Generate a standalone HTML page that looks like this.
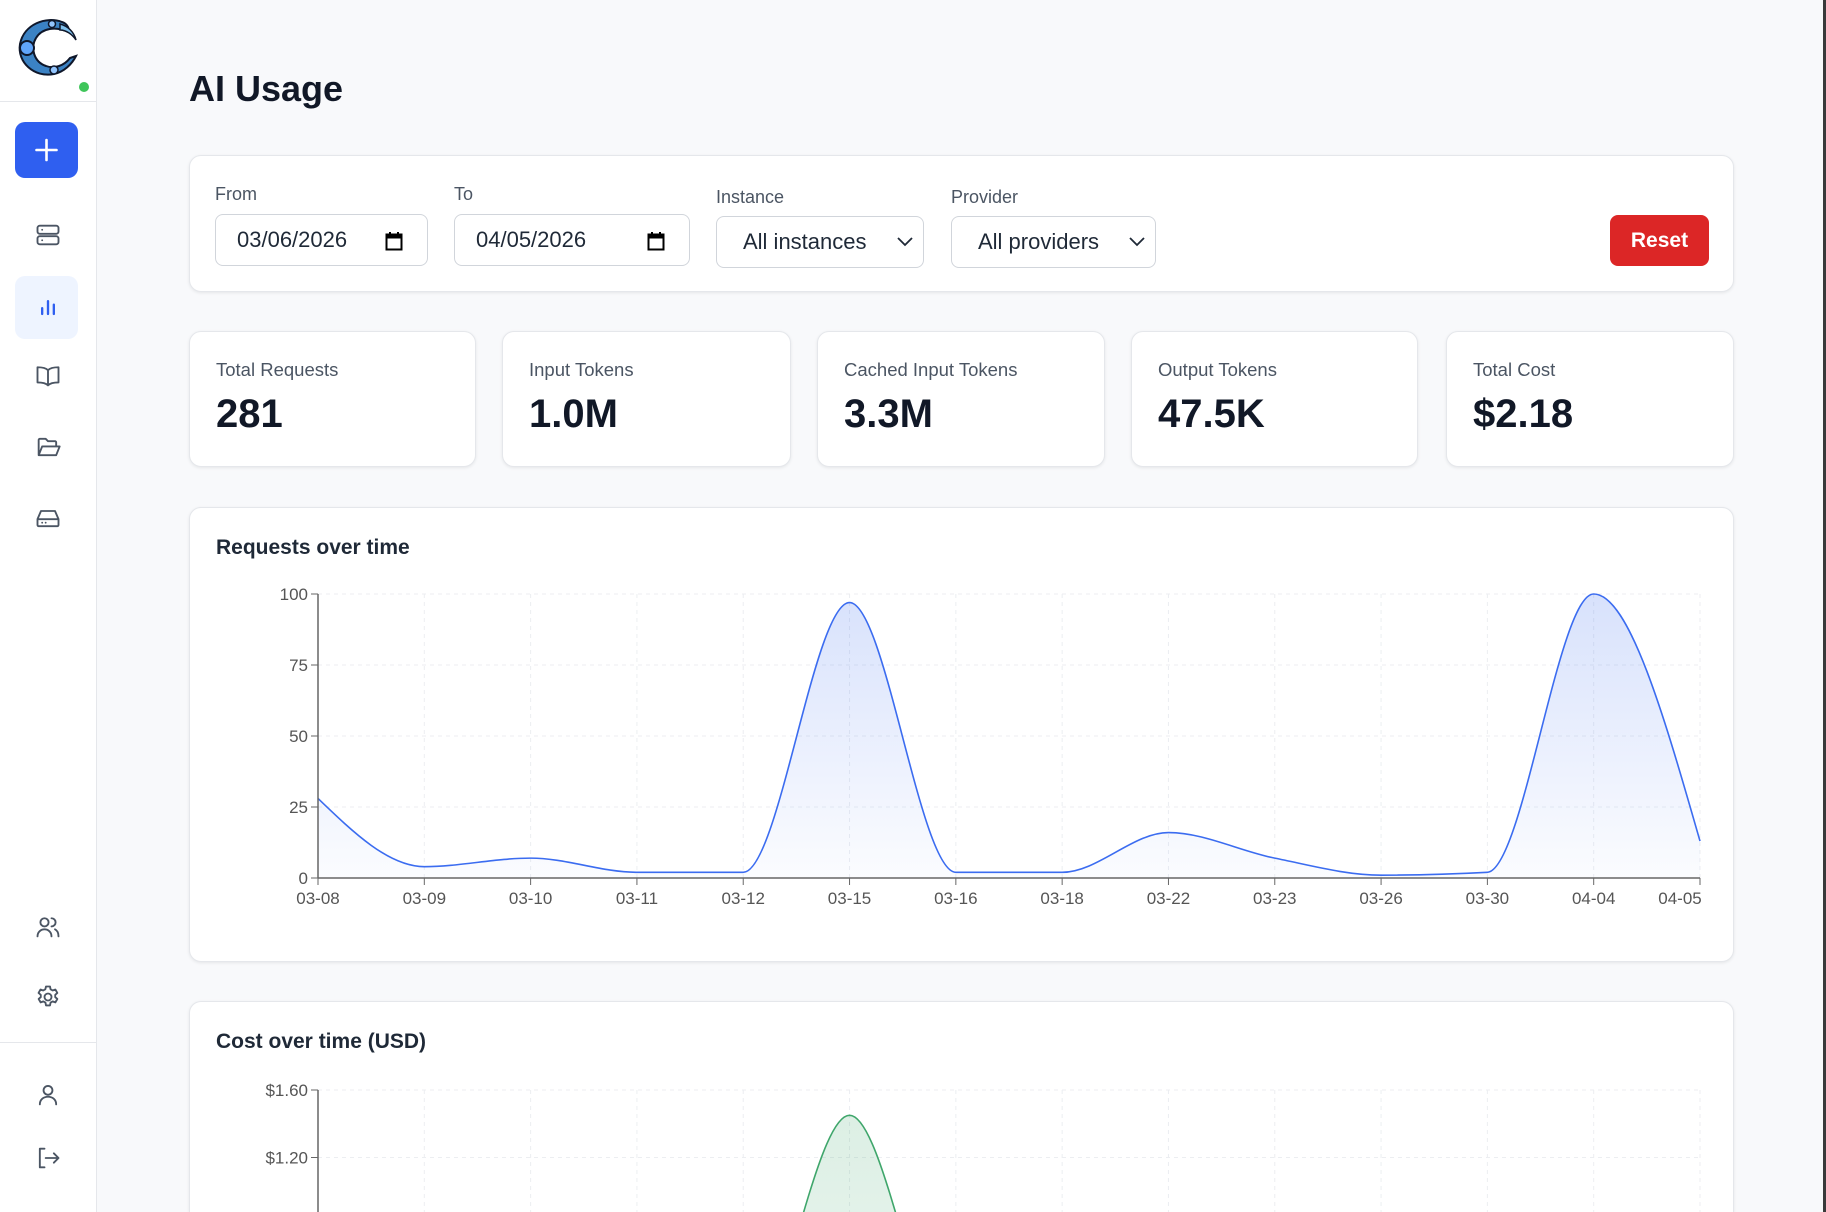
<!DOCTYPE html>
<html><head><meta charset="utf-8">
<style>
*{box-sizing:border-box;margin:0;padding:0}
html{width:1826px;height:1212px;overflow:hidden}
body{width:1826px;height:1212px;overflow:hidden;background:#f8f9fb;font-family:"Liberation Sans",Arial,sans-serif;position:relative;color:#111827}
.sb{position:absolute;left:0;top:0;width:97px;height:1212px;background:#fff;border-right:1px solid #e5e7eb}
.hr{position:absolute;left:0;width:97px;height:1px;background:#e5e7eb}
.ic{position:absolute;left:34px;width:28px;height:28px}
.ic svg{width:28px;height:28px;fill:none;stroke:#4b5563;stroke-width:1.6;stroke-linecap:round;stroke-linejoin:round}
.card{position:absolute;background:#fff;border:1px solid #e5e7eb;border-radius:12px;box-shadow:0 1px 3px rgba(0,0,0,.08)}
.lbl{position:absolute;font-size:18px;color:#4b5563}
.inp{position:absolute;height:52px;border:1px solid #d1d5db;border-radius:8px;background:#fff;font-size:22px;color:#1f2937;line-height:50px;padding-left:21px}
.stat .t{position:absolute;left:26px;top:27px;font-size:18.5px;color:#4b5563}
.stat .v{position:absolute;left:26px;top:60px;font-size:40px;font-weight:bold;color:#111827}
.ctitle{position:absolute;left:26px;font-size:21px;font-weight:bold;color:#1f2937}
.scroll{position:absolute;right:0;top:0;width:3px;height:1212px;background:#3a3a3a}
</style></head><body>
<div class="sb">
  <svg style="position:absolute;left:12px;top:14px" width="70" height="70" viewBox="0 0 70 70">
    <path d="M50 8 C34 2 12 10 8 30 C5 48 22 64 42 60 C52 58 60 50 64 42 L58 44 C52 52 42 55 34 52 C22 48 18 34 24 24 C30 14 44 12 56 18 C58 16 56 10 50 8 Z" fill="#3b82c4" stroke="#0f172a" stroke-width="2"/>
    <path d="M48 10 C56 12 62 18 64 26 C60 20 54 16 48 16 Z" fill="#7ec0ee" stroke="#0f172a" stroke-width="1.5"/>
    <circle cx="15" cy="34" r="7" fill="#60a5fa" stroke="#0f172a" stroke-width="2"/>
    <circle cx="42" cy="56" r="4" fill="#93c5fd" stroke="#0f172a" stroke-width="1.5"/>
    <circle cx="40" cy="10" r="3.5" fill="#93c5fd" stroke="#0f172a" stroke-width="1.5"/>
  </svg>
  <div style="position:absolute;left:79px;top:82px;width:10px;height:10px;border-radius:50%;background:#3fc55a"></div>
  <div class="hr" style="top:101px"></div>
  <div style="position:absolute;left:15px;top:122px;width:63px;height:56px;border-radius:10px;background:#2f5ff0">
    <svg width="63" height="56"><path d="M31.5 18v20M21.5 28h20" stroke="#fff" stroke-width="2.6" stroke-linecap="round"/></svg>
  </div>
  <div class="ic" style="top:221px"><svg viewBox="0 0 24 24"><rect x="3" y="4" width="18" height="7" rx="2"/><rect x="3" y="13" width="18" height="7" rx="2"/><path d="M7 7.5h.01M7 16.5h.01"/></svg></div>
  <div style="position:absolute;left:15px;top:276px;width:63px;height:63px;border-radius:10px;background:#eef4ff"></div>
  <div class="ic" style="top:293px"><svg viewBox="0 0 24 24" style="stroke:#2f5ff0;stroke-width:2"><path d="M7 18v-5M12 18V7M17 18v-8"/></svg></div>
  <div class="ic" style="top:362px"><svg viewBox="0 0 24 24"><path d="M12 7C10 5 7 4.5 3 4.5v13c4 0 7 .5 9 2.5 2-2 5-2.5 9-2.5v-13c-4 0-7 .5-9 2.5zM12 7v13"/></svg></div>
  <div class="ic" style="top:433px"><svg viewBox="0 0 24 24"><path d="M4 19V6a1 1 0 011-1h5l2 2h6a1 1 0 011 1v3M4 19l3-7.5h15L19 19z"/></svg></div>
  <div class="ic" style="top:504px"><svg viewBox="0 0 24 24"><path d="M3 13l3-7h12l3 7v5a1 1 0 01-1 1H4a1 1 0 01-1-1zM3 13h18M7 16h.01M10 16h.01"/></svg></div>
  <div class="ic" style="top:913px"><svg viewBox="0 0 24 24"><circle cx="9" cy="8" r="3.5"/><path d="M3 20c0-3.5 2.7-6 6-6s6 2.5 6 6M15 4.5a3.5 3.5 0 010 7M18 14c2 1 3 3 3 6"/></svg></div>
  <div class="ic" style="top:983px"><svg viewBox="0 0 24 24"><circle cx="12" cy="12" r="3"/><path d="M10.3 3h3.4l.5 2.4 1.8 1 2.3-.8 1.7 2.9-1.8 1.6v2l1.8 1.6-1.7 2.9-2.3-.8-1.8 1-.5 2.4h-3.4l-.5-2.4-1.8-1-2.3.8-1.7-2.9 1.8-1.6v-2L3.9 8.5l1.7-2.9 2.3.8 1.8-1z"/></svg></div>
  <div class="hr" style="top:1042px"></div>
  <div class="ic" style="top:1081px"><svg viewBox="0 0 24 24"><circle cx="12" cy="8" r="3.8"/><path d="M5 20c0-4 3-6.5 7-6.5s7 2.5 7 6.5"/></svg></div>
  <div class="ic" style="top:1144px"><svg viewBox="0 0 24 24"><path d="M9 4H5v16h4M10 12h11M17 8l4 4-4 4"/></svg></div>
</div>

<div style="position:absolute;left:189px;top:68px;font-size:36px;font-weight:bold;color:#111827">AI Usage</div>

<div class="card" style="left:189px;top:155px;width:1545px;height:137px">
  <div class="lbl" style="left:25px;top:28px">From</div>
  <div class="inp" style="left:25px;top:58px;width:213px">03/06/2026<svg style="position:absolute;right:24px;top:16px" width="18" height="20"><rect x="1.5" y="3.5" width="15" height="15" fill="none" stroke="#000" stroke-width="2"/><rect x="1.5" y="3.5" width="15" height="4" fill="#000"/><path d="M5 1v4M13 1v4" stroke="#000" stroke-width="2"/></svg></div>
  <div class="lbl" style="left:264px;top:28px">To</div>
  <div class="inp" style="left:264px;top:58px;width:236px">04/05/2026<svg style="position:absolute;right:24px;top:16px" width="18" height="20"><rect x="1.5" y="3.5" width="15" height="15" fill="none" stroke="#000" stroke-width="2"/><rect x="1.5" y="3.5" width="15" height="4" fill="#000"/><path d="M5 1v4M13 1v4" stroke="#000" stroke-width="2"/></svg></div>
  <div class="lbl" style="left:526px;top:31px">Instance</div>
  <div class="inp" style="left:526px;top:60px;width:208px;padding-left:26px">All instances<svg style="position:absolute;right:8px;top:18px" width="20" height="14"><path d="M3 3l7 7 7-7" fill="none" stroke="#1f2937" stroke-width="1.8"/></svg></div>
  <div class="lbl" style="left:761px;top:31px">Provider</div>
  <div class="inp" style="left:761px;top:60px;width:205px;padding-left:26px">All providers<svg style="position:absolute;right:8px;top:18px" width="20" height="14"><path d="M3 3l7 7 7-7" fill="none" stroke="#1f2937" stroke-width="1.8"/></svg></div>
  <div style="position:absolute;left:1420px;top:59px;width:99px;height:51px;background:#dc2626;border-radius:8px;color:#fff;font-size:21px;font-weight:bold;text-align:center;line-height:51px">Reset</div>
</div>

<div class="card stat" style="left:189px;top:331px;width:287px;height:136px"><div class="t">Total Requests</div><div class="v">281</div></div>
<div class="card stat" style="left:502px;top:331px;width:289px;height:136px"><div class="t">Input Tokens</div><div class="v">1.0M</div></div>
<div class="card stat" style="left:817px;top:331px;width:288px;height:136px"><div class="t">Cached Input Tokens</div><div class="v">3.3M</div></div>
<div class="card stat" style="left:1131px;top:331px;width:287px;height:136px"><div class="t">Output Tokens</div><div class="v">47.5K</div></div>
<div class="card stat" style="left:1446px;top:331px;width:288px;height:136px"><div class="t">Total Cost</div><div class="v">$2.18</div></div>

<div class="card" style="left:189px;top:507px;width:1545px;height:455px"><div class="ctitle" style="top:28px">Requests over time</div></div>
<div class="card" style="left:189px;top:1001px;width:1545px;height:211px;border-bottom:none;border-radius:12px 12px 0 0"><div class="ctitle" style="top:28px">Cost over time (USD)</div></div>

<svg id="ch" style="position:absolute;left:0;top:0" width="1826" height="1212" font-family="Liberation Sans, Arial, sans-serif"></svg>
<div class="scroll"></div>

<script>
(function(){
var svg=document.getElementById('ch');
var X0=318,X1=1700,step=(X1-X0)/13;
var labels=['03-08','03-09','03-10','03-11','03-12','03-15','03-16','03-18','03-22','03-23','03-26','03-30','04-04','04-05'];
var h='';
var GC='#eceef1';
function mono(p){
  var n=p.length,m=[];
  for(var i=1;i<n-1;i++){
    var h0=p[i][0]-p[i-1][0],h1=p[i+1][0]-p[i][0];
    var s0=(p[i][1]-p[i-1][1])/h0,s1=(p[i+1][1]-p[i][1])/h1;
    var pp=(s0*h1+s1*h0)/(h0+h1);
    m[i]=(Math.sign(s0)+Math.sign(s1))*Math.min(Math.abs(s0),Math.abs(s1),0.5*Math.abs(pp))||0;
  }
  m[0]=(3*(p[1][1]-p[0][1])/(p[1][0]-p[0][0])-m[1])/2;
  m[n-1]=(3*(p[n-1][1]-p[n-2][1])/(p[n-1][0]-p[n-2][0])-m[n-2])/2;
  var d='M'+p[0][0]+','+p[0][1];
  for(var i=0;i<n-1;i++){
    var dx=(p[i+1][0]-p[i][0])/3;
    d+='C'+(p[i][0]+dx)+','+(p[i][1]+dx*m[i])+','+(p[i+1][0]-dx)+','+(p[i+1][1]-dx*m[i+1])+','+p[i+1][0]+','+p[i+1][1];
  }
  return d;
}
h+='<defs><clipPath id="cp"><rect x="0" y="0" width="1826" height="1212"/></clipPath><linearGradient id="gb" x1="0" y1="0" x2="0" y2="1"><stop offset="0" stop-color="#3b6cf0" stop-opacity=".2"/><stop offset="1" stop-color="#3b6cf0" stop-opacity=".02"/></linearGradient><linearGradient id="gg" x1="0" y1="0" x2="0" y2="1"><stop offset="0" stop-color="#3fa66b" stop-opacity=".18"/><stop offset="1" stop-color="#3fa66b" stop-opacity=".1"/></linearGradient></defs><g clip-path="url(#cp)">';
var T=594,B=878;
function gy(v){return B-(B-T)*v/100;}
for(var i=1;i<=13;i++){var x=X0+i*step;h+='<line x1="'+x+'" y1="'+T+'" x2="'+x+'" y2="'+B+'" stroke="'+GC+'" stroke-dasharray="4 4"/>';}
[25,50,75,100].forEach(function(v){h+='<line x1="'+X0+'" y1="'+gy(v)+'" x2="'+X1+'" y2="'+gy(v)+'" stroke="'+GC+'" stroke-dasharray="4 4"/>';});
var vals=[28,4,7,2,2,97,2,2,16,7,1,2,100,13];
var pts=vals.map(function(v,i){return [X0+i*step,gy(v)];});
var d=mono(pts);
h+='<path d="'+d+'L'+X1+','+B+'L'+X0+','+B+'Z" fill="url(#gb)"/>';
h+='<path d="'+d+'" fill="none" stroke="#3b6cf0" stroke-width="1.6"/>';
h+='<line x1="'+X0+'" y1="'+T+'" x2="'+X0+'" y2="'+B+'" stroke="#666" stroke-width="1.5"/>';
h+='<line x1="'+X0+'" y1="'+B+'" x2="'+X1+'" y2="'+B+'" stroke="#666" stroke-width="1.5"/>';
[0,25,50,75,100].forEach(function(v){var y=gy(v);h+='<line x1="'+(X0-7)+'" y1="'+y+'" x2="'+X0+'" y2="'+y+'" stroke="#666"/><text x="'+(X0-10)+'" y="'+(y+6)+'" font-size="17" fill="#555" text-anchor="end">'+v+'</text>';});
labels.forEach(function(l,i){var x=X0+i*step;h+='<line x1="'+x+'" y1="'+B+'" x2="'+x+'" y2="'+(B+7)+'" stroke="#666"/><text x="'+(i==13?x-20:x)+'" y="'+(B+26)+'" font-size="17" fill="#555" text-anchor="middle">'+l+'</text>';});
var T2=1090,u=67.5;
function gy2(v){return T2+(1.6-v)/0.4*u;}
var B2=gy2(0);
for(var i=1;i<=13;i++){var x=X0+i*step;h+='<line x1="'+x+'" y1="'+T2+'" x2="'+x+'" y2="1212" stroke="'+GC+'" stroke-dasharray="4 4"/>';}
[1.6,1.2].forEach(function(v){h+='<line x1="'+X0+'" y1="'+gy2(v)+'" x2="'+X1+'" y2="'+gy2(v)+'" stroke="'+GC+'" stroke-dasharray="4 4"/>';});
var cv=[0.03,0.01,0.01,0.01,0.01,1.45,0.01,0.01,0.02,0.01,0.01,0.01,0.3,0.03];
var p2=cv.map(function(v,i){return [X0+i*step,gy2(v)];});
var d2=mono(p2);
h+='<path d="'+d2+'L'+X1+','+B2+'L'+X0+','+B2+'Z" fill="url(#gg)"/>';
h+='<path d="'+d2+'" fill="none" stroke="#3fa66b" stroke-width="1.6"/>';
h+='<line x1="'+X0+'" y1="'+T2+'" x2="'+X0+'" y2="1212" stroke="#666" stroke-width="1.5"/>';
[1.6,1.2].forEach(function(v){var y=gy2(v);h+='<line x1="'+(X0-7)+'" y1="'+y+'" x2="'+X0+'" y2="'+y+'" stroke="#666"/><text x="'+(X0-10)+'" y="'+(y+6)+'" font-size="17" fill="#555" text-anchor="end">$'+v.toFixed(2)+'</text>';});
h+='</g>';
svg.innerHTML=h;
})();
</script>
</body></html>
